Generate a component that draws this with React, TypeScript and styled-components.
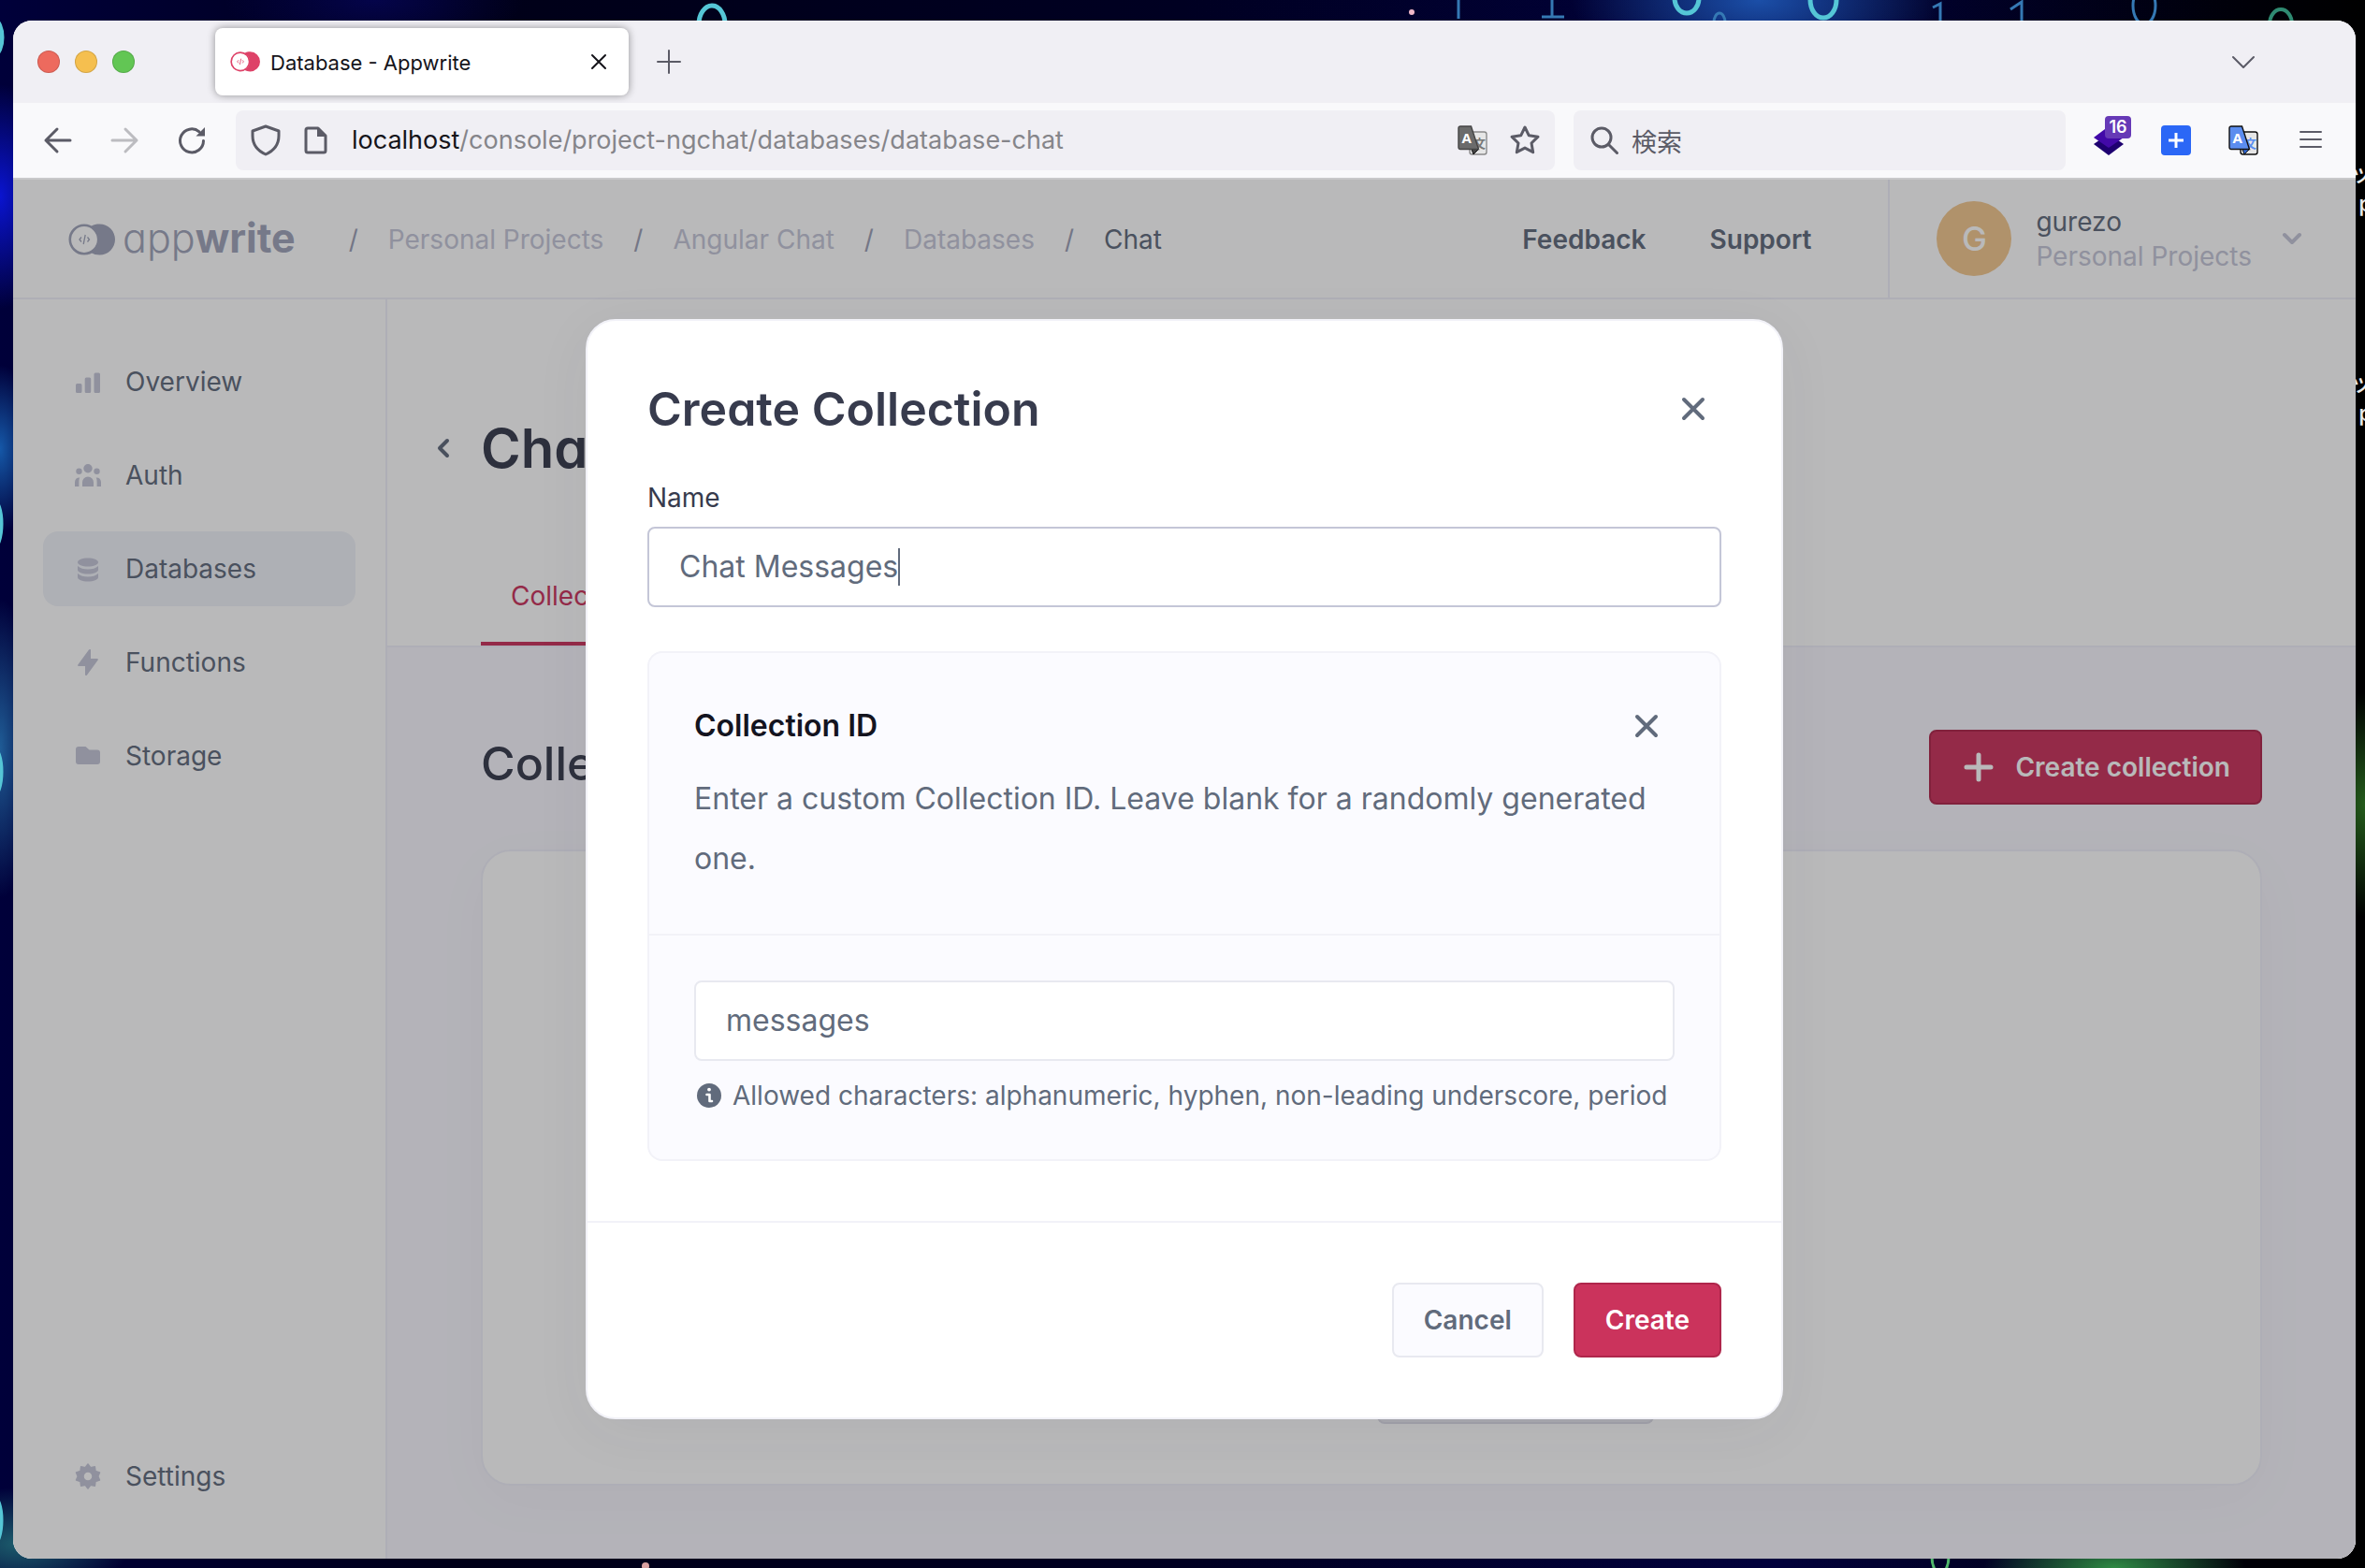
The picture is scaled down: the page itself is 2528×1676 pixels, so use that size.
import React from "react";
import styled, { createGlobalStyle } from "styled-components";

const sans = `Inter, "Liberation Sans", "Noto Sans CJK JP", sans-serif`;

const GlobalStyle = createGlobalStyle`
  *, *::before, *::after { box-sizing: border-box; }
  html, body { margin: 0; padding: 0; }
  body { font-family: ${sans}; background: #000; color: #616b7c; }
  button, input { font: inherit; color: inherit; margin: 0; }
  button { background: none; border: 0; padding: 0; cursor: pointer; }
  a { color: inherit; text-decoration: none; }
  h1, h2, h3, p, ul, ol { margin: 0; padding: 0; }
  ul, ol { list-style: none; }
  svg { display: block; flex: none; overflow: visible; }
`;

/* ---------- desktop ---------- */

const Desktop = styled.div`
  position: relative;
  display: flex;
  min-height: 100vh;
  padding: 22px 10px 10px 14px;
  overflow: hidden;
  background:
    radial-gradient(ellipse 60px 120px at 0 210px, #0a14d0, transparent),
    radial-gradient(ellipse 40px 90px at 0 480px, #1558a8, transparent),
    radial-gradient(ellipse 40px 160px at 0 800px, #1f5c96, transparent),
    radial-gradient(ellipse 120px 60px at 20px 1650px, #1c5c6c, transparent),
    radial-gradient(ellipse 200px 90px at 1880px 0, #1b4fa8, transparent),
    radial-gradient(ellipse 160px 60px at 400px 0, #04044a, transparent),
    radial-gradient(ellipse 60px 120px at 100% 860px, #255c1c, transparent),
    radial-gradient(ellipse 140px 50px at 2260px 100%, #2f8a44, transparent),
    linear-gradient(90deg, #00003a, #000018 20%, #000022 50%, #01013c 75%, #000008 95%, #000);
`;

const Wallpaper = styled.svg`
  position: absolute;
  inset: 0;
  width: 100%;
  height: 100%;
`;

const IconLabel = styled.div<{ $top: number }>`
  position: absolute;
  top: ${(p) => p.$top}px;
  right: -8px;
  display: grid;
  justify-items: end;
  font-size: 24px;
  line-height: 32px;
  font-weight: 500;
  color: #e8e8e8;
`;

const Window = styled.div`
  position: relative;
  flex: 1;
  display: flex;
  flex-direction: column;
  min-width: 0;
  border-radius: 20px;
  overflow: hidden;
  background: #fff;
`;

/* ---------- browser chrome ---------- */

const TabStrip = styled.div`
  display: flex;
  align-items: center;
  height: 88px;
  padding: 0 104px 0 26px;
  background: #f0eff4;
  box-shadow: inset 0 1px 0 #fff;
`;

const Lights = styled.div`
  display: flex;
  gap: 16px;
  margin-right: 86px;
`;

const Light = styled.button<{ $color: string }>`
  width: 24px;
  height: 24px;
  border-radius: 50%;
  background: ${(p) => p.$color};
  box-shadow: inset 0 0 0 1px rgba(0, 0, 0, 0.14);
`;

const Tab = styled.div`
  display: flex;
  align-items: center;
  gap: 11px;
  width: 442px;
  height: 72px;
  padding: 0 22px 0 16px;
  border-radius: 8px;
  background: #fff;
  box-shadow: 0 0 8px rgba(0, 0, 0, 0.4);
  font-size: 22px;
  line-height: 32px;
  color: #15141a;
`;

const TabTitle = styled.span`
  flex: 1;
  padding-top: 2px;
`;

const NewTab = styled.button`
  margin: 0 auto 0 31px;
`;

const Toolbar = styled.div`
  display: flex;
  align-items: center;
  height: 82px;
  padding: 0 32px 0 34px;
  background: #f9f9fb;
  border-bottom: 2px solid #c8c8ca;
`;

const NavButtons = styled.div`
  display: flex;
  gap: 43px;
  margin-right: 32px;
`;

const AddressBar = styled.div`
  flex: 1;
  display: flex;
  align-items: center;
  height: 64px;
  padding: 0 16px;
  border-radius: 8px;
  background: #f0eff4;
  font-size: 27px;
  line-height: 40px;
  color: #15141a;

  svg { margin-right: 22px; }
  button svg { margin-right: 0; }
`;

const Path = styled.input`
  flex: 1;
  min-width: 0;
  padding: 0;
  border: 0;
  outline: 0;
  background: none;
  color: #85858a;
`;

const AddressActions = styled.div`
  display: flex;
  gap: 24px;
`;

const Search = styled.div`
  display: flex;
  align-items: center;
  gap: 14px;
  width: 526px;
  height: 64px;
  margin: 0 30px 0 20px;
  padding: 0 18px;
  border-radius: 8px;
  background: #f0eff4;
  font-size: 28px;
`;

const SearchInput = styled.input`
  flex: 1;
  min-width: 0;
  padding: 0;
  border: 0;
  outline: 0;
  background: none;
  font-family: "Noto Sans CJK JP", sans-serif;
  font-size: 27px;
  &::placeholder { color: #5b5b66; opacity: 1; }
`;

const Extensions = styled.div`
  display: flex;
  align-items: center;
  gap: 40px;
`;

const Extension = styled.button`
  position: relative;
`;

const Badge = styled.span`
  position: absolute;
  top: -10px;
  right: -8px;
  width: 28px;
  height: 24px;
  border-radius: 4px;
  background: #6639b6;
  color: #fff;
  font-size: 18px;
  font-weight: 600;
  line-height: 24px;
  text-align: center;
`;

/* ---------- console ---------- */

const Page = styled.div`
  position: relative;
  flex: 1;
  display: flex;
  flex-direction: column;
  background: #fff;
  font-size: 28px;
  line-height: 40px;
`;

const Header = styled.header`
  display: flex;
  align-items: stretch;
  height: 128px;
  padding: 2px 0 0 59px;
  border-bottom: 2px solid #f0f0f9;
`;

const Brand = styled.a`
  display: flex;
  align-items: center;
  gap: 8px;
  margin-right: 57px;
  font-size: 43px;
  font-weight: 300;
  line-height: 48px;
  font-feature-settings: "cv11";
  color: #a0a4b9;

  span { padding-bottom: 4px; }
  b { font-weight: 700; }
`;

const Crumbs = styled.ol`
  flex: 1;
  display: flex;
  align-items: center;
  gap: 32px;
  color: #c4c6d7;

  li { display: flex; gap: 32px; }
  li::before { content: "/"; color: #9c9fb5; }
`;

const CurrentCrumb = styled.span`
  color: #616b7c;
`;

const HeaderLinks = styled.nav`
  display: flex;
  align-items: center;
  gap: 68px;
  margin-right: 82px;
  font-weight: 600;
`;

const Account = styled.button`
  display: flex;
  align-items: center;
  gap: 26px;
  margin-top: -2px;
  padding: 0 56px 0 50px;
  border-left: 2px solid #f0f0f9;
  text-align: left;
  line-height: 37px;
`;

const Avatar = styled.span`
  width: 80px;
  height: 80px;
  border-radius: 50%;
  background: #f2c78e;
  color: #fff;
  font-size: 36px;
  font-weight: 500;
  line-height: 80px;
  text-align: center;
`;

const AccountText = styled.span`
  display: grid;
  margin-right: 5px;
  padding-top: 2px;

  small { font-size: 28px; color: #c4c6d7; }
`;

const Body = styled.div`
  flex: 1;
  display: flex;
`;

const Sidebar = styled.nav`
  display: flex;
  flex-direction: column;
  justify-content: space-between;
  width: 400px;
  padding: 48px 32px;
  border-right: 2px solid #f0f0f9;
`;

const NavList = styled.ul`
  display: grid;
  gap: 20px;
`;

const NavLink = styled.a<{ $active?: boolean }>`
  display: flex;
  align-items: center;
  gap: 24px;
  height: 80px;
  padding: 0 32px;
  border-radius: 16px;
  background: ${(p) => (p.$active ? "#f0f2f8" : "transparent")};

  svg { color: #c4c6d7; }
`;

const Main = styled.main`
  flex: 1;
  display: flex;
  flex-direction: column;
  background: #f8f7fe;
`;

const MainHeader = styled.div`
  padding: 119px 100px 0 35px;
  background: #fff;
  border-bottom: 2px solid #f0f0f9;
`;

const TitleRow = styled.div`
  display: flex;
  align-items: center;
  gap: 15px;
  height: 80px;
`;

const Back = styled.button`
  display: grid;
  place-items: center;
  width: 50px;
  height: 50px;
`;

const PageTitle = styled.h1`
  font-size: 58px;
  line-height: 80px;
  font-weight: 600;
  font-feature-settings: "cv11";
  color: #373b4d;
`;

const Tabs = styled.div`
  display: flex;
  padding: 98px 0 0 65px;
`;

const TabLink = styled.a`
  padding: 0 32px 29px;
  border-bottom: 4px solid #cb335c;
  color: #cb335c;
`;

const Content = styled.div`
  flex: 1;
  display: flex;
  flex-direction: column;
  gap: 48px;
  padding: 88px 100px 78px;
`;

const ContentHeader = styled.div`
  display: flex;
  align-items: flex-start;
  justify-content: space-between;
`;

const SectionTitle = styled.h2`
  font-size: 50px;
  line-height: 72px;
  font-weight: 500;
  font-feature-settings: "cv11";
  color: #373b4d;
`;

const Button = styled.button<{ $primary?: boolean }>`
  display: flex;
  align-items: center;
  gap: 20px;
  height: 80px;
  padding: 0 32px;
  border: 2px solid ${(p) => (p.$primary ? "#af264b" : "#e8e9f0")};
  border-radius: 8px;
  background: ${(p) => (p.$primary ? "#cb335c" : "#fbfbff")};
  color: ${(p) => (p.$primary ? "#fff" : "#616b7c")};
  font-weight: 600;
`;

const EmptyCard = styled.section`
  flex: 1;
  display: flex;
  align-items: flex-end;
  justify-content: center;
  padding-bottom: 64px;
  border: 2px solid #f0f0f9;
  border-radius: 32px;
  background: #fff;
  box-shadow: 0 16px 64px rgba(55, 59, 77, 0.03);
`;

const EmptyActions = styled.div`
  display: flex;
  justify-content: flex-end;
  width: 604px;
`;

const GhostAction = styled.div`
  width: 296px;
  height: 80px;
  border: 2px solid #dcdce6;
  border-radius: 8px;
  background: #e8e9f0;
`;

/* ---------- dialog ---------- */

const Scrim = styled.div`
  position: absolute;
  inset: 0;
  display: flex;
  align-items: center;
  justify-content: center;
  background: rgba(22, 22, 26, 0.3);
`;

const Dialog = styled.form`
  width: 1280px;
  border: 2px solid #f2f2f8;
  border-radius: 32px;
  background: #fff;
  box-shadow: 0 12px 64px rgba(55, 59, 77, 0.05);
`;

const DialogBody = styled.div`
  padding: 64px;
`;

const DialogHeader = styled.div`
  display: flex;
  align-items: center;
  justify-content: space-between;
  height: 60px;
`;

const DialogTitle = styled.h2`
  font-size: 50px;
  line-height: 60px;
  font-weight: 600;
  font-feature-settings: "cv11";
  color: #373b4d;
`;

const Close = styled.button`
  display: grid;
  place-items: center;
  width: 60px;
  height: 60px;
`;

const Label = styled.label`
  display: block;
  margin: 45px 0 11px;
  color: #373b4d;
`;

const Field = styled.div<{ $focused?: boolean }>`
  display: flex;
  align-items: center;
  height: 86px;
  padding: 0 32px;
  border: 2px solid ${(p) => (p.$focused ? "#c4c6d7" : "#e8e9f0")};
  border-radius: 8px;
  background: #fff;
  font-size: 32px;
`;

const TextInput = styled.input<{ $hug?: boolean }>`
  ${(p) => (p.$hug ? "field-sizing: content;" : "flex: 1;")}
  min-width: 0;
  padding: 0;
  border: 0;
  outline: 0;
  background: none;
  caret-color: transparent;
`;

const Caret = styled.span`
  width: 2px;
  height: 40px;
  background: #616b7c;
`;

const IdBox = styled.section`
  margin-top: 47px;
  border: 2px solid #f2f2f8;
  border-radius: 16px;
  background: #fbfbff;
`;

const IdIntro = styled.div`
  padding: 48px;
  border-bottom: 2px solid #f2f2f8;
`;

const IdTitle = styled.h3`
  font-size: 32px;
  line-height: 40px;
  font-weight: 600;
  color: #14141f;
`;

const IdText = styled.p`
  margin-top: 16px;
  font-size: 32px;
  line-height: 64px;
`;

const IdForm = styled.div`
  padding: 48px;
`;

const Helper = styled.p`
  display: flex;
  align-items: center;
  gap: 12px;
  margin-top: 17px;
  padding-left: 3px;
`;

const DialogFooter = styled.div`
  display: flex;
  justify-content: flex-end;
  gap: 32px;
  padding: 64px;
  border-top: 2px solid #f2f2f8;
`;

/* ---------- drawings ---------- */

const Line = ({ d, size = 28, color = "#5b5b66", width = 2, join = "round" as "round" | "miter" }) => (
  <svg width={size} height={size} viewBox={`0 0 ${size} ${size}`} fill="none" stroke={color}
    strokeWidth={width} strokeLinecap="round" strokeLinejoin={join}>
    <path d={d} />
  </svg>
);

const Cross = () => <Line size={24} width={4} color="#616b7c" d="M2 2 22 22 M22 2 2 22" />;

const Logo = ({ width, color }: { width: number; color: string }) => (
  <svg width={width} viewBox="0 0 50 34" fill="none">
    <path fill={color} d="M24 3C27 1 30 .5 33.500 .5a16.500 16.500 0 0 1 0 33c-3.500 0-6.500-.8-9.500-2.500C36 25 36 9 24 3Z" />
    <circle cx="17" cy="17" r="15.200" stroke={color} strokeWidth="2.600" />
    <path stroke={color} strokeWidth="1.300" d="m14 14.500-2 2.500 2 2.500M20.500 14.500l2 2.500-2 2.500M18.200 12l-2 10" />
  </svg>
);

const Translate = ({ colored }: { colored?: boolean }) => (
  <svg width="32" height="32" viewBox="0 0 32 32">
    <rect x="13" y="7" width="18" height="24" rx="2.500" fill="#e6e6e6" stroke={colored ? "#111" : "#8a8a8a"} strokeWidth="1.400" />
    <text x="17" y="24" fontSize="13" fontWeight="700" fontFamily="Noto Sans CJK JP" fill={colored ? "#5b8def" : "#777"}>文</text>
    <path d="M15 25.500h7.500L17 31z" fill={colored ? "#2f66d0" : "#444"} stroke="#111" />
    <path d="M3 1h11.500l8 24.500H3a2 2 0 0 1-2-2V3a2 2 0 0 1 2-2z" fill={colored ? "#5b8def" : "#6b6b6b"} stroke={colored ? "#111" : "#444"} strokeWidth="1.400" />
    <text x="4.500" y="18.500" fontSize="15" fontWeight="700" fontFamily="Open Sans" fill="#fff">A</text>
  </svg>
);

const icons = {
  overview: <path d="M1 17.500a1.500 1.500 0 0 1 1.500-1.500H6a1.500 1.500 0 0 1 1.500 1.500v7A1.500 1.500 0 0 1 6 26H2.500A1.500 1.500 0 0 1 1 24.500zM10.700 11a1.500 1.500 0 0 1 1.500-1.500h3.500a1.500 1.500 0 0 1 1.500 1.500v13.500a1.500 1.500 0 0 1-1.500 1.500h-3.500a1.500 1.500 0 0 1-1.500-1.500zM20.500 6A1.500 1.500 0 0 1 22 4.500h3.500A1.500 1.500 0 0 1 27 6v18.500a1.500 1.500 0 0 1-1.500 1.500H22a1.500 1.500 0 0 1-1.500-1.500z" />,
  auth: (
    <>
      <circle cx="14" cy="6.800" r="4.700" /><circle cx="4.500" cy="9.800" r="3.200" /><circle cx="23.500" cy="9.800" r="3.200" />
      <path d="M8 26v-4.500a6 6 0 0 1 12 0V26zM0 26v-4.500c0-3.300 2.200-5.200 5.300-5-.8 1.400-.9 3-.9 5V26zM28 26v-4.500c0-3.300-2.200-5.200-5.300-5 .8 1.400.9 3 .9 5V26z" />
    </>
  ),
  databases: (
    <path d="M3 7c0-2.700 5-4.500 11-4.500S25 4.300 25 7s-5 4.500-11 4.500S3 9.700 3 7zM3 11c2.500 2.500 6.500 3.400 11 3.400S22.500 13.500 25 11v4c0 2.700-5 4.500-11 4.500S3 17.700 3 15zM3 19c2.500 2.500 6.500 3.400 11 3.400S22.500 21.500 25 19v4c0 2.700-5 4.500-11 4.500S3 25.700 3 23z" />
  ),
  functions: <path d="M17 1c0-1-1.300-1.300-2-.4L3.300 16.400C2.800 17.200 3.300 18 4.200 18H11v9c0 1.200 1.300 1.500 2 .5l11.700-15.900c.6-.8 0-1.600-.9-1.600H17z" />,
  storage: <path d="M1 7a3 3 0 0 1 3-3h7.500l4 3.500H24a3 3 0 0 1 3 3V20a3 3 0 0 1-3 3H4a3 3 0 0 1-3-3z" />,
  settings: (
    <path fillRule="evenodd" d="m14 1 2.800 3.800 4.600-1 .6 4.700L26.500 10l-1.700 4 1.700 4-4.500 1.500-.6 4.700-4.600-1L14 27l-2.800-3.800-4.600 1L6 19.500 1.500 18l1.700-4-1.700-4L6 8.500l.6-4.700 4.600 1zM14 9a5 5 0 1 0 0 10 5 5 0 0 0 0-10z" strokeWidth="1.500" stroke="currentColor" strokeLinejoin="round" />
  ),
};

const NavItem = ({ icon, label, active }: { icon: keyof typeof icons; label: string; active?: boolean }) => (
  <li>
    <NavLink href="#" $active={active}>
      <svg width="32" height="32" viewBox="-2 -2 32 32" fill="currentColor">{icons[icon]}</svg>
      {label}
    </NavLink>
  </li>
);

/* Glowing zeros and ones that peek out round the window. */
const Digits = () => (
  <Wallpaper aria-hidden="true" fill="none" strokeWidth="5">
    <g stroke="#55c6d6">
      <ellipse cx="761" cy="26" rx="14" ry="20" />
      <ellipse cx="1803" cy="-2" rx="13" ry="16" />
      <ellipse cx="1949" cy="0" rx="14" ry="19" />
      <ellipse cx="-6" cy="40" rx="8" ry="18" />
      <ellipse cx="-8" cy="560" rx="9" ry="26" />
      <ellipse cx="-8" cy="825" rx="9" ry="26" />
      <ellipse cx="-8" cy="1625" rx="9" ry="26" />
    </g>
    <g stroke="#3579b4" strokeWidth="3">
      <path d="M1659 0v18M1648 18h24M2066 8l8-4v20M2149 10l12-8v22M1559 0v20" />
      <ellipse cx="2292" cy="6" rx="12" ry="20" />
      <ellipse cx="1838" cy="24" rx="6" ry="10" />
    </g>
    <ellipse cx="2438" cy="26" rx="12" ry="16" stroke="#2f8a72" strokeWidth="4" />
    <ellipse cx="2074" cy="1664" rx="9" ry="18" stroke="#4fb56b" strokeWidth="3" />
    <circle cx="1509" cy="13" r="3" fill="#f0b8c8" />
    <circle cx="690" cy="1674" r="4" fill="#d8a0a0" />
  </Wallpaper>
);

const crumbs = ["Personal Projects", "Angular Chat", "Databases"];

export default function App() {
  return (
    <Desktop>
      <GlobalStyle />
      <Digits />
      <IconLabel $top={170}><span>ッ</span><span>p</span></IconLabel>
      <IconLabel $top={394}><span>ッ</span><span>p</span></IconLabel>
      <Window>
        <TabStrip>
          <Lights>
            <Light $color="#ed6a5e" aria-label="Close window" />
            <Light $color="#f5bf4f" aria-label="Minimize window" />
            <Light $color="#62c654" aria-label="Zoom window" />
          </Lights>
          <Tab>
            <Logo width={32} color="#de4268" />
            <TabTitle>Database - Appwrite</TabTitle>
            <button aria-label="Close tab"><Line size={20} color="#15141a" d="M3 3 17 17 M17 3 3 17" /></button>
          </Tab>
          <NewTab aria-label="New tab"><Line size={24} d="M12 0v24M0 12h24" /></NewTab>
          <button aria-label="List all tabs"><Line size={32} d="M5 11l11 11 11-11" /></button>
        </TabStrip>

        <Toolbar>
          <NavButtons>
            <button aria-label="Back"><Line width={3} d="M27 14H1M13 2 1 14l12 12" /></button>
            <button aria-label="Forward"><Line width={3} color="#bcbcc0" d="M1 14h26M15 2l12 12-12 12" /></button>
            <button aria-label="Reload">
              <svg width="30" height="30" viewBox="0 0 30 30" fill="none">
                <path d="M27.500 15.500A12.500 12.500 0 1 1 23 5.800" stroke="#5b5b66" strokeWidth="3" strokeLinecap="round" />
                <path d="M29 1v9.500H19.500z" fill="#5b5b66" />
              </svg>
            </button>
          </NavButtons>
          <AddressBar>
            <Line size={32} width={3} d="M16 1 2 6v5c0 9 5 16 14 20 9-4 14-11 14-20V6z" />
            <svg width="32" height="32" viewBox="0 0 32 32" fill="none">
              <path d="M7 3h11l8 8v16a2 2 0 0 1-2 2H7a2 2 0 0 1-2-2V5a2 2 0 0 1 2-2z" stroke="#5b5b66" strokeWidth="3" strokeLinejoin="round" />
              <path d="M17 2v10h10z" fill="#5b5b66" />
            </svg>
            <label htmlFor="address">localhost</label>
            <Path id="address" defaultValue="/console/project-ngchat/databases/database-chat" />
            <AddressActions>
              <button aria-label="Translate this page"><Translate /></button>
              <button aria-label="Bookmark this page">
                <Line size={32} width={3} d="M16 2l4.300 8.800 9.700 1.400-7 6.800 1.700 9.700-8.700-4.600-8.700 4.600L9 19l-7-6.800 9.700-1.400z" />
              </button>
            </AddressActions>
          </AddressBar>
          <Search>
            <svg width="30" height="30" viewBox="0 0 30 30" fill="none" stroke="#5b5b66" strokeWidth="3" strokeLinecap="round">
              <circle cx="12" cy="12" r="10" /><path d="m19.500 19.500 9 9" />
            </svg>
            <SearchInput placeholder="検索" aria-label="検索" />
          </Search>
          <Extensions>
            <Extension aria-label="Layers">
              <svg width="32" height="32" viewBox="0 0 32 32">
                <path d="M16 9 32 20 16 32 0 20z" fill="#1e0070" />
                <path d="M16 1 32 13 16 24 0 13z" fill="#4209a8" />
              </svg>
              <Badge>16</Badge>
            </Extension>
            <Extension aria-label="Add">
              <svg width="32" height="32" viewBox="0 0 32 32">
                <rect width="32" height="32" rx="4" fill="#2b67f6" />
                <path d="M16 8v16M8 16h16" stroke="#fff" strokeWidth="3" />
              </svg>
            </Extension>
            <Extension aria-label="Translate"><Translate colored /></Extension>
            <Extension aria-label="Menu"><Line size={32} width={2} d="M5 7h22M5 15h22M5 23h22" /></Extension>
          </Extensions>
        </Toolbar>

        <Page>
          <Header>
            <Brand href="#">
              <Logo width={50} color="#a0a4b9" />
              <span>app<b>write</b></span>
            </Brand>
            <Crumbs>
              {crumbs.map((name) => (
                <li key={name}><a href="#">{name}</a></li>
              ))}
              <li><CurrentCrumb>Chat</CurrentCrumb></li>
            </Crumbs>
            <HeaderLinks>
              <a href="#">Feedback</a>
              <a href="#">Support</a>
            </HeaderLinks>
            <Account>
              <Avatar>G</Avatar>
              <AccountText>gurezo<small>Personal Projects</small></AccountText>
              <Line size={24} width={4} color="#c4c6d7" d="M4 8l8 8 8-8" />
            </Account>
          </Header>

          <Body>
            <Sidebar>
              <NavList>
                <NavItem icon="overview" label="Overview" />
                <NavItem icon="auth" label="Auth" />
                <NavItem icon="databases" label="Databases" active />
                <NavItem icon="functions" label="Functions" />
                <NavItem icon="storage" label="Storage" />
              </NavList>
              <NavList>
                <NavItem icon="settings" label="Settings" />
              </NavList>
            </Sidebar>

            <Main>
              <MainHeader>
                <TitleRow>
                  <Back aria-label="Back to databases"><Line size={24} width={4} color="#616b7c" d="M16 4l-8 8 8 8" /></Back>
                  <PageTitle>Chat</PageTitle>
                </TitleRow>
                <Tabs><TabLink href="#">Collections</TabLink></Tabs>
              </MainHeader>
              <Content>
                <ContentHeader>
                  <SectionTitle>Collections</SectionTitle>
                  <Button $primary>
                    <Line size={38} width={5} color="#fff" d="M19 6v26M6 19h26" />
                    Create collection
                  </Button>
                </ContentHeader>
                <EmptyCard>
                  <EmptyActions><GhostAction /></EmptyActions>
                </EmptyCard>
              </Content>
            </Main>
          </Body>

          <Scrim>
            <Dialog role="dialog" aria-labelledby="dialog-title" onSubmit={(e) => e.preventDefault()}>
              <DialogBody>
                <DialogHeader>
                  <DialogTitle id="dialog-title">Create Collection</DialogTitle>
                  <Close type="button" aria-label="Close dialog"><Cross /></Close>
                </DialogHeader>
                <Label htmlFor="name">Name</Label>
                <Field $focused>
                  <TextInput id="name" $hug defaultValue="Chat Messages" />
                  <Caret />
                </Field>
                <IdBox>
                  <IdIntro>
                    <DialogHeader>
                      <IdTitle>Collection ID</IdTitle>
                      <Close type="button" aria-label="Remove custom ID"><Cross /></Close>
                    </DialogHeader>
                    <IdText>Enter a custom Collection ID. Leave blank for a randomly generated one.</IdText>
                  </IdIntro>
                  <IdForm>
                    <Field>
                      <TextInput aria-label="Collection ID" defaultValue="messages" />
                    </Field>
                    <Helper>
                      <svg width="26" height="26" viewBox="0 0 26 26">
                        <circle cx="13" cy="13" r="13" fill="#616b7c" />
                        <circle cx="13" cy="6.600" r="1.900" fill="#fff" />
                        <path d="M10.500 12h3v7h2.500" fill="none" stroke="#fff" strokeWidth="2.600" strokeLinecap="round" strokeLinejoin="round" />
                      </svg>
                      Allowed characters: alphanumeric, hyphen, non-leading underscore, period
                    </Helper>
                  </IdForm>
                </IdBox>
              </DialogBody>
              <DialogFooter>
                <Button type="button">Cancel</Button>
                <Button $primary type="submit">Create</Button>
              </DialogFooter>
            </Dialog>
          </Scrim>
        </Page>
      </Window>
    </Desktop>
  );
}
